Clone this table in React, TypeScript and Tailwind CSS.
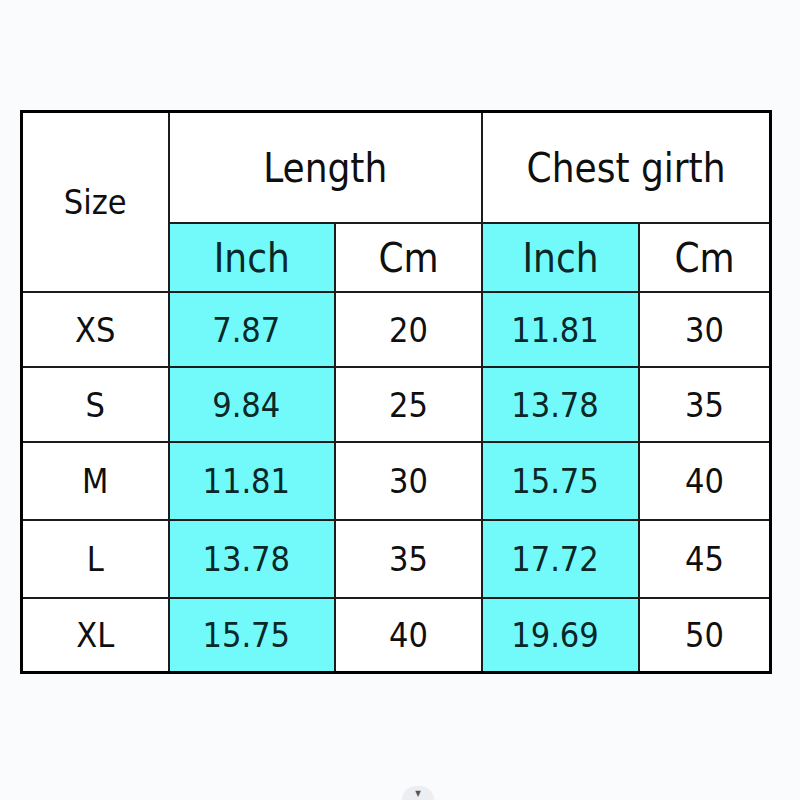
const rows = [
  { size: "XS", lenIn: "7.87", lenCm: "20", chIn: "11.81", chCm: "30" },
  { size: "S", lenIn: "9.84", lenCm: "25", chIn: "13.78", chCm: "35" },
  { size: "M", lenIn: "11.81", lenCm: "30", chIn: "15.75", chCm: "40" },
  { size: "L", lenIn: "13.78", lenCm: "35", chIn: "17.72", chCm: "45" },
  { size: "XL", lenIn: "15.75", lenCm: "40", chIn: "19.69", chCm: "50" },
];

const cell = "flex items-center justify-center leading-none";
const white = `${cell} bg-white text-[#0f0f0f]`;
const cyan = `${cell} bg-[#72fafa] text-[#0a2828]`;

export default function App() {
  return (
    <div
      className="relative w-[800px] h-[800px] bg-[#fafbfd] pt-[110px] pl-[20px]"
      style={{ fontFamily: '"DejaVu Sans Condensed", "DejaVu Sans", sans-serif' }}
    >
      <div className="inline-grid grid-cols-[144.5px_164.5px_145px_155px_129px] grid-rows-[109px_67px_73px_73px_76px_76px_72px] gap-[2px] bg-[#1c1c1c] border-[3px] border-black">
        <div className={`${white} row-span-2 text-[34px]`}>Size</div>
        <div className={`${white} col-span-2 text-[40px]`}>Length</div>
        <div className={`${white} col-span-2 text-[40px]`}>Chest girth</div>
        <div className={`${cyan} text-[40px]`}>Inch</div>
        <div className={`${white} text-[40px]`}>Cm</div>
        <div className={`${cyan} text-[40px]`}>Inch</div>
        <div className={`${white} text-[40px]`}>Cm</div>
        {rows.map((r) => (
          <div key={r.size} className="contents">
            <div className={`${white} text-[34px]`}>{r.size}</div>
            <div className={`${cyan} text-[34px] pr-[11px]`}>{r.lenIn}</div>
            <div className={`${white} text-[34px]`}>{r.lenCm}</div>
            <div className={`${cyan} text-[34px] pr-[11px]`}>{r.chIn}</div>
            <div className={`${white} text-[34px]`}>{r.chCm}</div>
          </div>
        ))}
      </div>

      <div className="absolute left-[402px] top-[786px] w-[32px] h-[14px] rounded-t-full bg-[#eceef2] flex justify-center pt-[4px]">
        <span className="text-[8px] leading-none text-[#555]">▼</span>
      </div>
    </div>
  );
}
